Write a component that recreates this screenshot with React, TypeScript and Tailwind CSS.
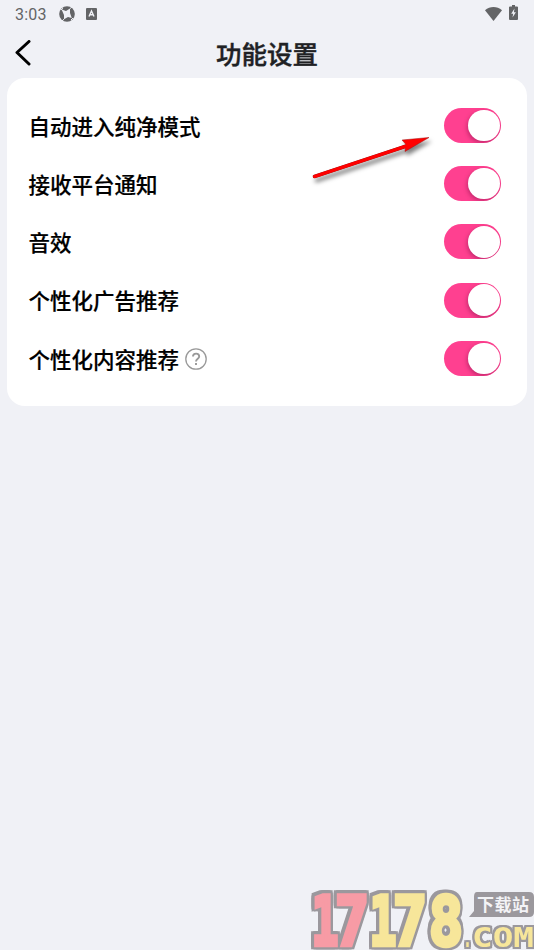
import React, { useState } from 'react';

const settings = [
  { key: 'pure', label: '自动进入纯净模式' },
  { key: 'notice', label: '接收平台通知' },
  { key: 'sound', label: '音效' },
  { key: 'ads', label: '个性化广告推荐' },
  { key: 'content', label: '个性化内容推荐', help: true },
];

/* ── Status bar ── */
const StatusBar: React.FC = () => (
  <div className="flex h-7 items-center pl-[15px] pr-4 text-[#636466]">
    <span className="w-[34px] pt-px font-[Roboto] text-base leading-none tracking-[0.2px]">3:03</span>
    <svg width="16" height="16" viewBox="0 0 16 16" className="ml-[10px]">
      <circle cx="8" cy="8" r="7.8" fill="currentColor" />
      <path
        d="M2.600 3.600 7 5 11 2.600 11 7 12.800 12 9 11 5 13.200 5 9Z"
        fill="#f0f1f6"
      />
      <path d="M2 4 4 2.200M11 2.600 13 .8M14 12 12 14M5 13.200 3 15" stroke="#f0f1f6" strokeWidth="1" />
    </svg>
    <svg width="11" height="12" viewBox="0 0 11 12" className="ml-[11px]">
      <rect width="11" height="12" rx="1" fill="currentColor" />
      <path d="M3 8.500 5.500 3 8 8.500M4 6.800h3" fill="none" stroke="#f0f1f6" strokeWidth="1.400" />
    </svg>
    <svg width="17" height="14" viewBox="0 0 17 14" className="ml-auto">
      <path d="M0 3.200C5-1 12-1 17 3.200L8.500 14Z" fill="currentColor" />
    </svg>
    <svg width="9" height="15" viewBox="0 0 9 16" preserveAspectRatio="none" className="mb-[3px] ml-[7px]">
      <path
        d="M3 0h3v1.500h2a1 1 0 0 1 1 1V15a1 1 0 0 1-1 1H1a1 1 0 0 1-1-1V2.500a1 1 0 0 1 1-1h2Z"
        fill="currentColor"
      />
      <path d="M5.500 3.800 2.200 9.200h2L3.500 13.200 6.900 7.800h-2Z" fill="#f0f1f6" />
    </svg>
  </div>
);

/* ── Toggle ── */
const Toggle: React.FC<{ on: boolean; label: string; onChange: () => void }> = ({
  on,
  label,
  onChange,
}) => (
  <button
    type="button"
    role="switch"
    aria-checked={on}
    aria-label={label}
    onClick={onChange}
    className={`flex h-[35px] w-[57px] items-center overflow-hidden rounded-full px-[1.500px] ${
      on ? 'justify-end bg-[#ff4090]' : 'justify-start bg-gray-300'
    }`}
  >
    <span className="size-[31.500px] rounded-full bg-white shadow-[-1px_2px_4px_rgba(90,0,50,0.35)]" />
  </button>
);

/* ── Site logo in the corner ── */
const digits = [
  { char: '1', x: 311.5, width: 27, color: '#f79ba5' },
  { char: '7', x: 335, width: 34, color: '#f79ba5' },
  { char: '1', x: 369.5, width: 27, color: '#f7e69a' },
  { char: '7', x: 393, width: 34, color: '#f7e69a' },
  { char: '8', x: 429, width: 34, color: '#f7e69a' },
];

const SiteLogo: React.FC = () => (
  <svg
    width="226"
    height="62"
    viewBox="308 888 226 62"
    className="absolute bottom-0 right-0 overflow-visible"
    fontWeight="700"
  >
    <text
      y="944.500"
      fontFamily="DejaVu Sans Mono"
      fontSize="67"
      strokeWidth="4.500"
      className="[filter:drop-shadow(2.500px_0_0_#9b989d)_drop-shadow(-2.500px_0_0_#9b989d)_drop-shadow(0_2.500px_0_#9b989d)_drop-shadow(0_-2.500px_0_#9b989d)]"
    >
      {digits.map((d) => (
        <tspan
          key={d.x}
          x={d.x}
          textLength={d.width}
          lengthAdjust="spacingAndGlyphs"
          fill={d.color}
          stroke={d.color}
        >
          {d.char}
        </tspan>
      ))}
    </text>
    <path d="M477 892h52q5 0 5 5v15q0 5-5 5h-60l5-6v-14q0-5 3-5Z" fill="#9b989d" />
    <text
      x="477"
      y="911"
      textLength="52"
      fontFamily="'Noto Sans CJK SC', sans-serif"
      fontSize="17"
      fill="#f3f3f6"
    >
      下载站
    </text>
    <text
      y="947"
      fontFamily="DejaVu Sans Mono"
      fontSize="26"
      fill="#f7e69a"
      className="[filter:drop-shadow(2px_0_0_#9b989d)_drop-shadow(-2px_0_0_#9b989d)_drop-shadow(0_2px_0_#9b989d)_drop-shadow(0_-2px_0_#9b989d)]"
    >
      <tspan x="463" textLength="9" lengthAdjust="spacingAndGlyphs">.</tspan>
      <tspan x="472" textLength="62" lengthAdjust="spacingAndGlyphs">COM</tspan>
    </text>
  </svg>
);

export default function App() {
  const [enabled, setEnabled] = useState<Record<string, boolean>>({
    pure: true,
    notice: true,
    sound: true,
    ads: true,
    content: true,
  });

  const toggle = (key: string) => setEnabled((prev) => ({ ...prev, [key]: !prev[key] }));

  return (
    <div className="relative h-[950px] w-[534px] overflow-hidden bg-[#f0f1f6] font-['Noto_Sans_CJK_SC',sans-serif]">
      <StatusBar />

      {/* ── Header ── */}
      <header className="grid h-[50px] grid-cols-[60px_1fr_60px] items-center">
        <button type="button" aria-label="返回" className="pl-[15px]">
          <svg width="16" height="26" viewBox="0 0 16 26" fill="none">
            <path d="M14 1.500 2 12.500 14 24" stroke="#000" strokeWidth="3" strokeLinecap="round" strokeLinejoin="round" />
          </svg>
        </button>
        <h1 className="text-center text-[25.500px] font-medium leading-none text-[#202124] [-webkit-text-stroke:0.4px_#202124]">
          功能设置
        </h1>
      </header>

      {/* ── Settings card ── */}
      <main className="relative mx-[7px] h-[328px] rounded-[18px] bg-white pl-[21.500px] pr-[26px] pt-[18.200px]">
        {settings.map((item) => (
          <div key={item.key} className="flex h-[58.300px] items-center">
            <span className="text-[21.500px] font-medium leading-none text-black [-webkit-text-stroke:0.2px_#000]">
              {item.label}
            </span>
            {item.help && (
              <svg width="22" height="22" viewBox="0 0 22 22" fill="none" stroke="#999" className="ml-[6px]">
                <circle cx="11" cy="11" r="10.200" strokeWidth="1.300" />
                <path d="M8 8.600C8 4.600 14.200 4.700 14.200 8.500c0 2.300-3.200 2.200-3.200 5M11 15v2" strokeWidth="1.900" />
              </svg>
            )}
            <div className="ml-auto">
              <Toggle
                on={enabled[item.key]}
                label={item.label}
                onChange={() => toggle(item.key)}
              />
            </div>
          </div>
        ))}

        {/* pointer to the first switch */}
        <svg
          width="130"
          height="60"
          viewBox="307 130 130 60"
          className="pointer-events-none absolute left-[300px] top-[52px] drop-shadow-[2px_4px_2px_rgba(0,0,0,0.5)]"
        >
          <path d="M314.500 176.500 408 145.500" stroke="#a01010" strokeWidth="3.600" strokeLinecap="round" />
          <path d="M429 137.500 402 140l4 4.500-1 7Z" fill="#f00" stroke="#a01010" strokeWidth=".5" />
          <path d="M314.500 176.500 408 145.500" stroke="#f00" strokeWidth="3" strokeLinecap="round" />
        </svg>
      </main>

      <SiteLogo />
    </div>
  );
}
